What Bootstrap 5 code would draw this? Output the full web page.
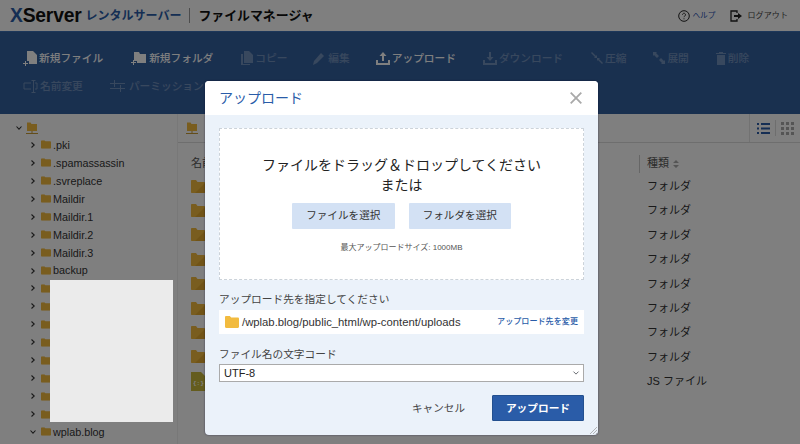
<!DOCTYPE html>
<html lang="ja">
<head>
<meta charset="utf-8">
<title>ファイルマネージャ</title>
<link href="https://cdn.jsdelivr.net/npm/bootstrap@5.3.0/dist/css/bootstrap.min.css" rel="stylesheet">
<style>
html,body{height:444px;overflow:hidden}
body{font-family:"Liberation Sans","Noto Sans CJK JP",sans-serif;font-size:11px;color:#333;background:#fff;position:relative}
.fm-top{height:32px;padding:0 12px 0 10px;border-bottom:1px solid #3a6fb5;background:#fff}
.fm-brand{font-size:19.300px;font-weight:700;letter-spacing:-.2px;color:#111;line-height:1}
.fm-brand b{color:#2a5ca8}
.fm-sub{font-size:12px;font-weight:700;color:#2a5ca8;margin-left:4px}
.fm-div{width:1px;height:15px;background:#999;margin:0 8px}
.fm-title{font-size:12.900px;font-weight:700;color:#111}
.fm-help{font-size:7.700px;color:#2a4fb0;margin:0 14px 0 2px}
.fm-out{font-size:8px;color:#444;margin-left:6px;letter-spacing:.1px}
.fm-tools{height:82px;background:#33609f;padding:12px 0 0 23px;align-content:flex-start}
.fm-tool{height:28px;color:#fff;font-size:10.700px;font-weight:500;white-space:nowrap;opacity:.3;flex:none}
.fm-tool.on{opacity:1}
.fm-tool svg{display:block;margin-right:2px}
.fm-gap26{margin-left:26px}.fm-gap27{margin-left:27px}.fm-gap28{margin-left:28px}
.fm-main{height:330px}
.fm-side{width:178px;border-right:1px solid #f0f0f0;padding:5px 0 0 17px;flex:none}
.fm-row{height:17.940px;font-size:10.800px;color:#333;white-space:nowrap}
.fm-root{height:17px}
.fm-kid{padding-left:13px}
.fm-chev{width:6px;height:6px;margin-right:5px;flex:none}
.fm-name{margin-left:2px}
.fm-pane{min-width:0}
.fm-crumb{height:29px;border-bottom:1px solid #ddd;padding-left:8px}
.fm-views{margin-left:auto;height:28px;border-left:1px solid #e4e4e4;padding:0 6px 0 7px;gap:5px}
.fm-views i{display:block;width:1px;height:16px;background:#ddd}
.fm-head{height:31px;margin-top:5px;padding-left:13px;font-size:11px;color:#555}
.fm-list{padding-left:13px;margin-top:-5px}
.fm-frow{height:24.400px;font-size:11px;color:#333}
.fm-c1{width:456px;flex:none}
.fm-bar{width:1px;height:18px;background:#ccc;margin-right:7px;margin-left:-8px}
.fm-sortic{margin-left:4px}
.fm-shade{position:absolute;inset:0;background:rgba(0,0,0,.5)}
.fm-mask{position:absolute;left:50px;top:280px;width:123px;height:142px;background:#ebebeb}
.fm-modal{position:absolute;left:205px;top:81px;width:393px;height:354px;border:0;border-radius:4px;background:#ebf2fa;overflow:hidden;box-shadow:0 0 2px rgba(0,0,40,.6)}
.fm-mh{height:34px;background:#fff;padding:0 16px 0 14px;border:0;border-radius:0}
.fm-mt{font-size:14px;line-height:1;color:#2a5ca8;font-weight:400;margin-top:-1px}
.fm-mb{padding:13px 14px 0}
.fm-drop{height:152px;background:#fff;border:1px dashed #ccd3da;padding-top:26px}
.fm-drop p{font-size:14px;line-height:20px;color:#222;margin:0}
.fm-btns{margin-top:8px;gap:14px}
.fm-sel{width:102.500px;height:26px;padding:0;font-size:10.600px;color:#333;background:#d3e1f4;border:0;border-radius:1px}
.fm-max{font-size:8px;color:#555;margin-top:13px}
.fm-lab{font-size:10.700px;color:#444;line-height:14px;margin:12px 0 4px}
.fm-dest{height:24px;background:#fff;padding:0 6px}
.fm-path{font-size:11.300px;color:#333;margin-left:3px}
.fm-chg{font-size:8.100px;font-weight:500;color:#2a5ca8;margin-left:auto}
.fm-lab2{margin:13px 0 3px}
.fm-pick{height:18px;min-height:0;padding:0 4px;font-size:11px;line-height:16px;border:1px solid #aaa;border-radius:0;color:#222;background-position:right 3px center;background-size:8px 6px}
.fm-foot{padding-top:13px}
.fm-cancel{font-size:10.600px;color:#444;padding:0;border:0;background:none;margin-right:27px;line-height:26px}
.fm-go{width:92px;height:26px;padding:0;font-size:10.700px;font-weight:700;color:#fff;background:#2a5ca8;border:1px solid #23508f;border-radius:1px}
.fm-grip{position:absolute;right:1px;bottom:1px}
.fm-jsmark{font-size:6px;font-weight:700;fill:#fff;font-family:"Liberation Mono",monospace}
</style>
</head>
<body>
<svg width="0" height="0" class="position-absolute">
<symbol id="fold" viewBox="0 0 14 12"><path d="M0 1.200C0 .5.5 0 1.200 0h3.600l1.400 1.600h6.600c.7 0 1.200.5 1.200 1.200v8c0 .7-.5 1.200-1.200 1.200H1.200C.5 12 0 11.500 0 10.800z"/></symbol>
<symbol id="bigf" viewBox="0 0 14 13"><path d="M0 1C0 .4.400 0 1 0h4l1.500 2H13c.6 0 1 .4 1 1v9c0 .6-.4 1-1 1H1c-.6 0-1-.4-1-1z" fill="#f2bb3f"/><path d="M14 3v9c0 .6-.4 1-1 1H4z" fill="#e3a92f"/></symbol>
<symbol id="rootf" viewBox="0 0 12 12"><path d="M1 .5h3.500L5.500 2H11v7H1z" fill="#f2bb3f"/><path d="M6 9v2M0 11.500h12" stroke="#c79a35" fill="none"/></symbol>
<symbol id="chr" viewBox="0 0 6 6"><path d="M1.500.5 4.200 3 1.500 5.500" fill="none" stroke="#333" stroke-width="1.100"/></symbol>
<symbol id="chd" viewBox="0 0 6 6"><path d="M.5 1.500 3 4.200 5.500 1.500" fill="none" stroke="#333" stroke-width="1.100"/></symbol>
</svg>

<header class="fm-top d-flex align-items-center">
  <span class="fm-brand"><b>X</b>Server</span><span class="fm-sub">レンタルサーバー</span><span class="fm-div"></span><span class="fm-title">ファイルマネージャ</span>
  <div class="ms-auto d-flex align-items-center">
    <svg width="12" height="12" viewBox="0 0 12 12"><circle cx="6" cy="6" r="5.300" fill="none" stroke="#222" stroke-width="1"/><path d="M4.500 4.700a1.500 1.500 0 1 1 2.300 1.300c-.6.400-.8.600-.8 1.200M6 8.300v1" fill="none" stroke="#222" stroke-width=".9"/></svg>
    <span class="fm-help">ヘルプ</span>
    <svg width="12" height="12" viewBox="0 0 12 12"><path d="M7 3V1H1v10h6V9" fill="none" stroke="#222" stroke-width="1.300"/><path d="M4 5h4V3l4 3-4 3V7H4z" fill="#222"/></svg>
    <span class="fm-out">ログアウト</span>
  </div>
</header>

<nav class="fm-tools d-flex flex-wrap">
  <div class="fm-tool on d-flex align-items-center"><svg width="14" height="16" viewBox="0 0 14 16" fill="#fff"><path d="M4 1h6l4 4v9H6v-3H4z"/><path d="M0 13h2v-2h1v2h2v1H3v2H2v-2H0z"/></svg>新規ファイル</div>
  <div class="fm-tool on d-flex align-items-center fm-gap28"><svg width="16" height="14" viewBox="0 0 16 14" fill="#fff"><path d="M3 1h5l1 2h6v9H6v-2H3z"/><path d="M0 11h2V9h1v2h2v1H3v2H2v-2H0z"/></svg>新規フォルダ</div>
  <div class="fm-tool d-flex align-items-center fm-gap27"><svg width="13" height="14" viewBox="0 0 13 14" fill="#fff"><path d="M4 0h5l4 4v8H4z"/><path d="M1 3h2v10h7v1H1z"/></svg>コピー</div>
  <div class="fm-tool d-flex align-items-center fm-gap26"><svg width="13" height="13" viewBox="0 0 13 13" fill="#fff"><path d="M0 13l1-4 7-8 3 3-7 7z"/></svg>編集</div>
  <div class="fm-tool on d-flex align-items-center fm-gap26"><svg width="14" height="14" viewBox="0 0 14 14" fill="#fff"><path d="M7 1l3.500 4H8v5H6V5H3.500z"/><path d="M0 9h2v3h10V9h2v5H0z"/></svg>アップロード</div>
  <div class="fm-tool d-flex align-items-center fm-gap27"><svg width="14" height="14" viewBox="0 0 14 14" fill="#fff"><path d="M6 1h2v5h2.500L7 10 3.500 6H6z"/><path d="M0 9h2v3h10V9h2v5H0z"/></svg>ダウンロード</div>
  <div class="fm-tool d-flex align-items-center fm-gap28"><svg width="12" height="12" viewBox="0 0 12 12" fill="#fff"><path d="M0 1l1-1 4 4 1-1v3H3l1-1zM12 11l-1 1-4-4-1 1V6h3L8 7z"/></svg>圧縮</div>
  <div class="fm-tool d-flex align-items-center fm-gap27"><svg width="12" height="12" viewBox="0 0 12 12" fill="#fff"><path d="M0 0h4L3 1l3 3-2 2-3-3-1 1zM12 12H8l1-1-3-3 2-2 3 3 1-1z"/></svg>展開</div>
  <div class="fm-tool d-flex align-items-center fm-gap27"><svg width="10" height="13" viewBox="0 0 10 13" fill="#fff"><path d="M1 3h8v10H1zM0 1h3V0h4v1h3v1H0z"/></svg>削除</div>
  <div class="w-100"></div>
  <div class="fm-tool d-flex align-items-center"><svg width="15" height="13" viewBox="0 0 15 13" fill="none" stroke="#fff"><path d="M8 3H1v6h7M12 3h2v6h-2M8.500.5h4M8.500 12.500h4M10.500 1v11"/></svg>名前変更</div>
  <div class="fm-tool d-flex align-items-center fm-gap27"><svg width="15" height="12" viewBox="0 0 15 12" fill="#fff"><path d="M4 0h1v3h10v1H5v3H4V4H0V3h4zM10 5h1v3h4v1h-4v3h-1V9H0V8h10z"/></svg>&thinsp;パーミッション</div>
</nav>

<main class="fm-main d-flex">
  <aside class="fm-side">
    <div class="fm-row fm-root d-flex align-items-center"><svg class="fm-chev" style="margin-right:4px;margin-left:-1px"><use href="#chd"/></svg><svg width="12" height="12"><use href="#rootf"/></svg></div>
    <div class="fm-kid">
      <div class="fm-row d-flex align-items-center"><svg class="fm-chev"><use href="#chr"/></svg><svg width="10" height="9" fill="#f2bb3f" viewBox="0 0 14 12"><use href="#fold"/></svg><span class="fm-name">.pki</span></div>
      <div class="fm-row d-flex align-items-center"><svg class="fm-chev"><use href="#chr"/></svg><svg width="10" height="9" fill="#f2bb3f" viewBox="0 0 14 12"><use href="#fold"/></svg><span class="fm-name">.spamassassin</span></div>
      <div class="fm-row d-flex align-items-center"><svg class="fm-chev"><use href="#chr"/></svg><svg width="10" height="9" fill="#f2bb3f" viewBox="0 0 14 12"><use href="#fold"/></svg><span class="fm-name">.svreplace</span></div>
      <div class="fm-row d-flex align-items-center"><svg class="fm-chev"><use href="#chr"/></svg><svg width="10" height="9" fill="#f2bb3f" viewBox="0 0 14 12"><use href="#fold"/></svg><span class="fm-name">Maildir</span></div>
      <div class="fm-row d-flex align-items-center"><svg class="fm-chev"><use href="#chr"/></svg><svg width="10" height="9" fill="#f2bb3f" viewBox="0 0 14 12"><use href="#fold"/></svg><span class="fm-name">Maildir.1</span></div>
      <div class="fm-row d-flex align-items-center"><svg class="fm-chev"><use href="#chr"/></svg><svg width="10" height="9" fill="#f2bb3f" viewBox="0 0 14 12"><use href="#fold"/></svg><span class="fm-name">Maildir.2</span></div>
      <div class="fm-row d-flex align-items-center"><svg class="fm-chev"><use href="#chr"/></svg><svg width="10" height="9" fill="#f2bb3f" viewBox="0 0 14 12"><use href="#fold"/></svg><span class="fm-name">Maildir.3</span></div>
      <div class="fm-row d-flex align-items-center"><svg class="fm-chev"><use href="#chr"/></svg><svg width="10" height="9" fill="#f2bb3f" viewBox="0 0 14 12"><use href="#fold"/></svg><span class="fm-name">backup</span></div>
      <div class="fm-row d-flex align-items-center"><svg class="fm-chev"><use href="#chr"/></svg><svg width="10" height="9" fill="#f2bb3f" viewBox="0 0 14 12"><use href="#fold"/></svg></div>
      <div class="fm-row d-flex align-items-center"><svg class="fm-chev"><use href="#chr"/></svg><svg width="10" height="9" fill="#f2bb3f" viewBox="0 0 14 12"><use href="#fold"/></svg></div>
      <div class="fm-row d-flex align-items-center"><svg class="fm-chev"><use href="#chr"/></svg><svg width="10" height="9" fill="#f2bb3f" viewBox="0 0 14 12"><use href="#fold"/></svg></div>
      <div class="fm-row d-flex align-items-center"><svg class="fm-chev"><use href="#chr"/></svg><svg width="10" height="9" fill="#f2bb3f" viewBox="0 0 14 12"><use href="#fold"/></svg></div>
      <div class="fm-row d-flex align-items-center"><svg class="fm-chev"><use href="#chr"/></svg><svg width="10" height="9" fill="#f2bb3f" viewBox="0 0 14 12"><use href="#fold"/></svg></div>
      <div class="fm-row d-flex align-items-center"><svg class="fm-chev"><use href="#chr"/></svg><svg width="10" height="9" fill="#f2bb3f" viewBox="0 0 14 12"><use href="#fold"/></svg></div>
      <div class="fm-row d-flex align-items-center"><svg class="fm-chev"><use href="#chr"/></svg><svg width="10" height="9" fill="#f2bb3f" viewBox="0 0 14 12"><use href="#fold"/></svg></div>
      <div class="fm-row d-flex align-items-center"><svg class="fm-chev"><use href="#chr"/></svg><svg width="10" height="9" fill="#f2bb3f" viewBox="0 0 14 12"><use href="#fold"/></svg></div>
      <div class="fm-row d-flex align-items-center"><svg class="fm-chev"><use href="#chd"/></svg><svg width="10" height="9" fill="#f2bb3f" viewBox="0 0 14 12"><use href="#fold"/></svg><span class="fm-name">wplab.blog</span></div>
    </div>
  </aside>
  <section class="fm-pane flex-grow-1">
    <div class="fm-crumb d-flex align-items-center">
      <svg width="12" height="12"><use href="#rootf"/></svg>
      <div class="fm-views d-flex align-items-center">
        <svg width="13" height="13" viewBox="0 0 13 13" fill="#2a5ca8"><path d="M0 1h2v2H0zM4 1h9v2H4zM0 5.500h2v2H0zM4 5.500h9v2H4zM0 10h2v2H0zM4 10h9v2H4z"/></svg>
        <i></i>
        <svg width="13" height="13" viewBox="0 0 13 13" fill="#aaa"><path d="M0 0h3v3H0zM5 0h3v3H5zM10 0h3v3h-3zM0 5h3v3H0zM5 5h3v3H5zM10 5h3v3h-3zM0 10h3v3H0zM5 10h3v3H5zM10 10h3v3h-3z"/></svg>
      </div>
    </div>
    <div class="fm-head d-flex align-items-center">
      <div class="fm-c1">名前</div>
      <div class="d-flex align-items-center"><span class="fm-bar"></span>種類<svg class="fm-sortic" width="6" height="8" viewBox="0 0 6 8" fill="#aaa"><path d="M3 0l3 3H0zM3 8L0 5h6z"/></svg></div>
    </div>
    <div class="fm-list">
      <div class="fm-frow d-flex align-items-center"><div class="fm-c1 d-flex"><svg width="14" height="13"><use href="#bigf"/></svg></div><div>フォルダ</div></div>
      <div class="fm-frow d-flex align-items-center"><div class="fm-c1 d-flex"><svg width="14" height="13"><use href="#bigf"/></svg></div><div>フォルダ</div></div>
      <div class="fm-frow d-flex align-items-center"><div class="fm-c1 d-flex"><svg width="14" height="13"><use href="#bigf"/></svg></div><div>フォルダ</div></div>
      <div class="fm-frow d-flex align-items-center"><div class="fm-c1 d-flex"><svg width="14" height="13"><use href="#bigf"/></svg></div><div>フォルダ</div></div>
      <div class="fm-frow d-flex align-items-center"><div class="fm-c1 d-flex"><svg width="14" height="13"><use href="#bigf"/></svg></div><div>フォルダ</div></div>
      <div class="fm-frow d-flex align-items-center"><div class="fm-c1 d-flex"><svg width="14" height="13"><use href="#bigf"/></svg></div><div>フォルダ</div></div>
      <div class="fm-frow d-flex align-items-center"><div class="fm-c1 d-flex"><svg width="14" height="13"><use href="#bigf"/></svg></div><div>フォルダ</div></div>
      <div class="fm-frow d-flex align-items-center"><div class="fm-c1 d-flex"><svg width="14" height="13"><use href="#bigf"/></svg></div><div>フォルダ</div></div>
      <div class="fm-frow d-flex align-items-center"><div class="fm-c1 d-flex"><svg width="14" height="19" viewBox="0 0 14 19"><path d="M0 0h10l4 4v15H0z" fill="#c9b93d"/><text x="2" y="13" class="fm-jsmark">{:}</text></svg></div><div>JS ファイル</div></div>
    </div>
  </section>
</main>

<div class="fm-shade"></div>
<div class="fm-mask"></div>

<div class="modal-content fm-modal">
  <div class="modal-header fm-mh d-flex justify-content-between align-items-center">
    <h5 class="modal-title fm-mt">アップロード</h5>
    <svg width="12" height="12" viewBox="0 0 12 12"><path d="M.7.7l10.600 10.600M11.300.7.7 11.300" stroke="#a9a9a9" stroke-width="1.800" fill="none"/></svg>
  </div>
  <div class="modal-body fm-mb">
    <div class="fm-drop text-center">
      <p>ファイルをドラッグ＆ドロップしてください</p>
      <p>または</p>
      <div class="d-flex justify-content-center fm-btns">
        <button class="btn fm-sel" type="button">ファイルを選択</button>
        <button class="btn fm-sel" type="button">フォルダを選択</button>
      </div>
      <div class="fm-max">最大アップロードサイズ: 1000MB</div>
    </div>
    <div class="fm-lab">アップロード先を指定してください</div>
    <div class="fm-dest d-flex align-items-center">
      <svg width="14" height="12" fill="#f2bb3f" viewBox="0 0 14 12"><use href="#fold"/></svg>
      <span class="fm-path">/wplab.blog/public_html/wp-content/uploads</span>
      <a class="fm-chg text-decoration-none" href="#">アップロード先を変更</a>
    </div>
    <div class="fm-lab fm-lab2">ファイル名の文字コード</div>
    <select class="form-select fm-pick"><option>UTF-8</option></select>
    <div class="fm-foot d-flex justify-content-end align-items-center">
      <button class="btn fm-cancel" type="button">キャンセル</button>
      <button class="btn fm-go" type="button">アップロード</button>
    </div>
  </div>
  <svg class="fm-grip" width="7" height="7" viewBox="0 0 7 7"><path d="M0 7l7-7M3 7l4-4M6 7l1-1" stroke="#999" stroke-width=".7"/></svg>
</div>
<script src="https://cdn.jsdelivr.net/npm/bootstrap@5.3.0/dist/js/bootstrap.bundle.min.js"></script>
</body>
</html>
